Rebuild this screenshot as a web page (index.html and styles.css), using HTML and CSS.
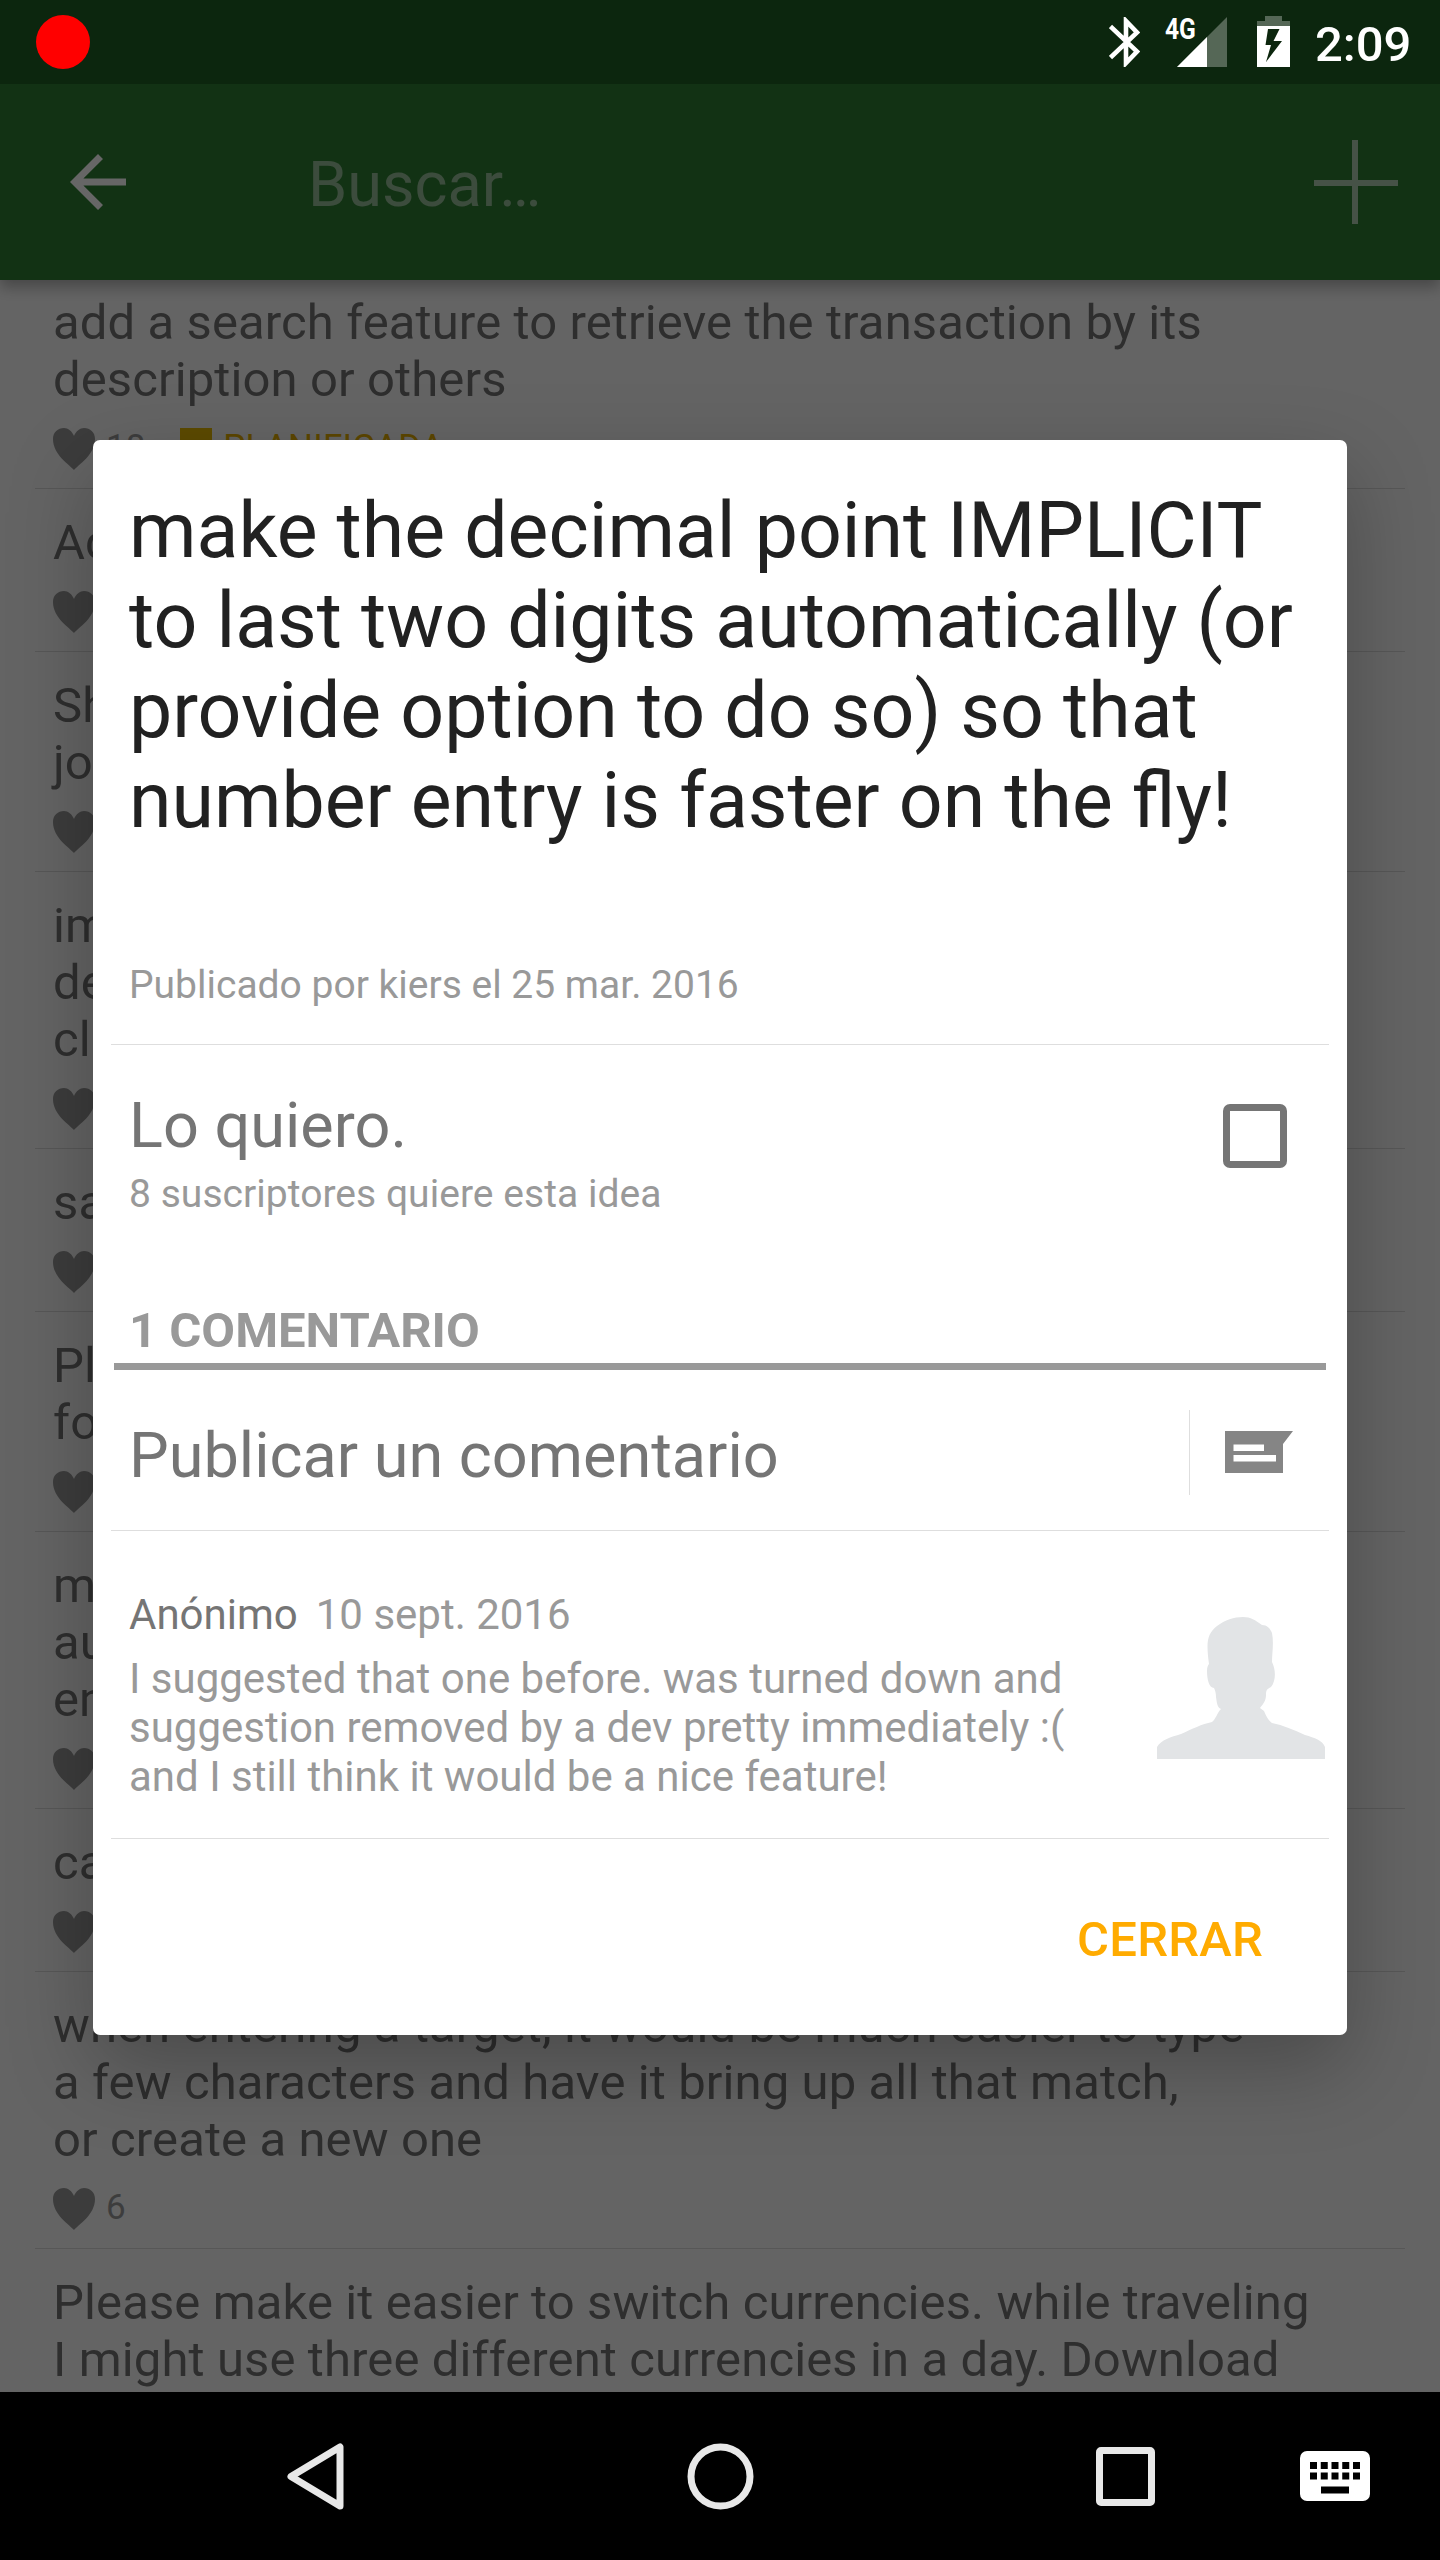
FILE: index.html
```html
<!DOCTYPE html>
<html lang="es">
<head>
<meta charset="utf-8">
<title>Buscar</title>
<link rel="stylesheet" href="styles.css">
</head>
<body>
<svg class="defs" width="0" height="0" aria-hidden="true">
  <symbol id="heart" viewBox="0 0 42 42"><path d="M21 42C17 37 0 27 0 11C0 4 5 0 11 0C15 0 19 3 21 8C23 3 27 0 31 0C37 0 42 4 42 11C42 27 25 37 21 42Z" fill="#969696"/></symbol>
</svg>
<div class="screen">
  <header class="status">
    <svg class="record" viewBox="0 0 54 54"><circle cx="27" cy="27" r="27" fill="#f00"/></svg>
    <div class="status-icons">
      <svg class="bluetooth" viewBox="0 0 31 50"><path d="M1.500 9.500L28 34.500L17 46V4L28 15.500L1.500 40.500" fill="none" stroke="#fff" stroke-width="4.600"/></svg>
      <div class="network">
        <span class="network-type">4G</span>
        <svg class="signal" viewBox="0 0 50 50"><path d="M50 0V50H0Z" fill="#fff" opacity=".3"/><path d="M30 20V50H0Z" fill="#fff"/></svg>
      </div>
      <svg class="battery" viewBox="0 0 33 51"><path d="M8 0H25V5H33V10H0V5H8Z" fill="#fff" opacity=".3"/><path fill-rule="evenodd" d="M0 10H33V51H0ZM11 13L8.500 29H14L9 46L25 25H16.500L22.500 13Z" fill="#fff"/></svg>
      <span class="clock">2:09</span>
    </div>
  </header>
  <div class="toolbar">
    <svg class="back" viewBox="0 0 56 56"><path d="M56 24.500H13.400L33 4.900L28 0L0 28L28 56L33 51.100L13.400 31.500H56Z" fill="#fff"/></svg>
    <span class="search">Buscar…</span>
    <svg class="plus" viewBox="0 0 84 84"><path d="M38 0H44V40H84V46H44V84H38V46H0V40H38Z" fill="#fff"/></svg>
  </div>
  <main class="ideas">
    <article class="idea"><p>add a search feature to retrieve the transaction by its<br>description or others</p><div class="meta"><svg class="heart"><use href="#heart"/></svg><span>18</span><i class="tag"></i><span class="tag-name">PLANIFICADA</span></div></article>
    <article class="idea"><p>Ac</p><div class="meta"><svg class="heart"><use href="#heart"/></svg></div></article>
    <article class="idea"><p>Sh<br>jo</p><div class="meta"><svg class="heart"><use href="#heart"/></svg></div></article>
    <article class="idea"><p>im<br>de<br>cl</p><div class="meta"><svg class="heart"><use href="#heart"/></svg></div></article>
    <article class="idea"><p>sa</p><div class="meta"><svg class="heart"><use href="#heart"/></svg></div></article>
    <article class="idea"><p>Pl<br>fo</p><div class="meta"><svg class="heart"><use href="#heart"/></svg></div></article>
    <article class="idea"><p>m<br>au<br>en</p><div class="meta"><svg class="heart"><use href="#heart"/></svg></div></article>
    <article class="idea"><p>ca</p><div class="meta"><svg class="heart"><use href="#heart"/></svg></div></article>
    <article class="idea"><p>when entering a target, it would be much easier to type<br>a few characters and have it bring up all that match,<br>or create a new one</p><div class="meta"><svg class="heart"><use href="#heart"/></svg><span>6</span></div></article>
    <article class="idea"><p>Please make it easier to switch currencies. while traveling<br>I might use three different currencies in a day. Download</p></article>
  </main>
  <nav class="navbar">
    <svg class="nav-back" viewBox="0 0 57 67"><path d="M53 4V63L4 33.500Z" fill="none" stroke="#e8e8e8" stroke-width="7" stroke-linejoin="round"/></svg>
    <svg class="nav-home" viewBox="0 0 67 67"><circle cx="33.500" cy="33.500" r="29.500" fill="none" stroke="#e8e8e8" stroke-width="7"/></svg>
    <svg class="nav-recent" viewBox="0 0 59 59"><rect x="3.500" y="3.500" width="52" height="52" rx="1.500" fill="none" stroke="#e8e8e8" stroke-width="7"/></svg>
    <svg class="nav-keyboard" viewBox="0 0 70 50"><rect width="70" height="50" rx="7" fill="#fff"/><path d="M10 14.500H60M10 25H60" stroke="#000" stroke-width="7" stroke-dasharray="7 3.750"/><path d="M21 39H49" stroke="#000" stroke-width="7"/></svg>
  </nav>
  <div class="scrim">
    <section class="dialog">
      <div class="intro">
        <h1>make the decimal point IMPLICIT<br>to last two digits automatically (or<br>provide option to do so) so that<br>number entry is faster on the fly!</h1>
        <p class="byline">Publicado por kiers el 25 mar. 2016</p>
      </div>
      <div class="vote">
        <div>
          <p class="big">Lo quiero.</p>
          <p class="subscribers">8 suscriptores quiere esta idea</p>
        </div>
        <span class="checkbox"></span>
      </div>
      <h2>1 COMENTARIO</h2>
      <div class="post">
        <p class="big">Publicar un comentario</p>
        <span class="separator"></span>
        <svg class="comment-icon" viewBox="0 0 68 42"><path fill-rule="evenodd" d="M0 0H68L58 13V42H0ZM8.500 13.500V20H39V13.500ZM8.500 24V30.500H51V24Z" fill="#858585"/></svg>
      </div>
      <div class="comment">
        <div class="comment-text">
          <p class="author">Anónimo<span>10 sept. 2016</span></p>
          <p>I suggested that one before. was turned down and<br>suggestion removed by a dev pretty immediately :(<br>and I still think it would be a nice feature!</p>
        </div>
        <svg class="avatar" viewBox="0 0 168 142"><path d="M0 142V130C4 123 14 120 24 117C35 112 45 107 55 105C59 102 60 96 64 92C60 90 60 86 59 80C59 76 58 73 57 71C52 71 50 62 50 54C50 50 51 48 52 47C49 25 50 17 60 9C68 3 77 0 86 0C94 0 98 3 105 8C110 8 113 11 115 16C117 26 115 36 115 45C119 53 119 64 114 70C110 72 109 73 109 78C109 84 106 87 103 91L107 94C109 99 112 104 115 106C126 108 137 113 148 118C158 121 165 123 168 130V142Z" fill="#e2e4e6"/></svg>
      </div>
      <footer><button>CERRAR</button></footer>
    </section>
  </div>
</div>
</body>
</html>
```
FILE: styles.css
```css
* { box-sizing: border-box; margin: 0; padding: 0; }
body { width: 1440px; height: 2560px; overflow: hidden; background: #000; font-family: Roboto, sans-serif; }
svg { display: block; flex: none; }
.defs { position: absolute; }
.screen { position: relative; display: flex; flex-direction: column; width: 1440px; height: 2560px; overflow: hidden; }
.status { position: relative; z-index: 3; display: flex; justify-content: space-between; height: 84px; padding: 0 31px 0 36px; background: #0c260e; }
.record { width: 54px; height: 54px; margin-top: 15px; }
.status-icons { display: flex; align-items: flex-start; }
.bluetooth { width: 31px; height: 50px; margin: 17px 25px 0 0; }
.network { position: relative; width: 62px; height: 50px; margin: 17px 30px 0 0; }
.signal { width: 50px; height: 50px; margin-left: 12px; }
.network-type { position: absolute; left: 0; top: -3px; color: #fff; font-size: 30px; line-height: 30px; font-weight: 700; transform: scaleX(.82); transform-origin: 0 0; }
.battery { width: 33px; height: 51px; margin: 16px 25px 0 0; }
.clock { width: 94px; margin-top: 16px; color: #fff; font-size: 49px; line-height: 57px; font-weight: 500; white-space: nowrap; }
.toolbar { position: relative; z-index: 1; flex: none; display: flex; align-items: flex-start; height: 196px; padding: 0 42px 0 70px; background: #2e7d32; box-shadow: 0 7px 14px rgba(0,0,0,.3); }
.back { width: 56px; height: 56px; margin-top: 70px; }
.search { flex: 1; margin: 64px 0 0 182px; color: rgba(255,255,255,.5); font-size: 63px; line-height: 74px; }
.plus { width: 84px; height: 84px; margin-top: 56px; opacity: .62; }
.ideas { flex: 1; min-height: 0; overflow: hidden; padding: 0 35px; background: #fafafa; }
.idea { padding: 25px 18px 18px; border-bottom: 1px solid rgba(0,0,0,.13); }
.idea:first-child { margin-top: -11px; }
.idea p { color: #737373; font-size: 49px; line-height: 57px; letter-spacing: .11px; white-space: nowrap; }
.meta { display: flex; align-items: center; height: 42px; margin-top: 20px; color: #999; font-size: 35px; line-height: 42px; }
.meta span { margin-top: -2px; }
.heart { width: 42px; height: 42px; margin-right: 11px; }
.tag { width: 32px; height: 32px; margin: 0 11px 10px 35px; background: #e6b800; }
.meta .tag-name { color: #e6b000; letter-spacing: .2px; }
.navbar { position: relative; z-index: 3; flex: none; display: flex; height: 168px; padding-left: 287px; background: #000; }
.nav-back { width: 57px; height: 67px; margin-top: 51px; }
.nav-home { width: 67px; height: 67px; margin: 51px 0 0 343px; }
.nav-recent { width: 59px; height: 59px; margin: 55px 0 0 342px; }
.nav-keyboard { width: 70px; height: 50px; margin: 59px 0 0 145px; }
.scrim { position: absolute; inset: 84px 0 168px; z-index: 2; background: rgba(0,0,0,.6); padding: 356px 93px 0; }
.dialog { height: 1595px; padding: 0 18px; background: #fff; border-radius: 7px; box-shadow: 0 32px 84px rgba(0,0,0,.26); white-space: nowrap; }
.intro { height: 605px; padding: 46px 18px 0; border-bottom: 1px solid #dedede; }
h1 { color: #212121; font-size: 77px; line-height: 90px; font-weight: 400; }
.byline { margin-top: 116px; color: #999; font-size: 39px; line-height: 46px; }
.vote { display: flex; justify-content: space-between; height: 245px; padding: 44px 42px 0 18px; }
.big { color: #757575; font-size: 63px; line-height: 74px; }
.subscribers { margin-top: 8px; color: #999; font-size: 39px; line-height: 46px; letter-spacing: .04px; }
.checkbox { width: 64px; height: 64px; margin-top: 15px; border: 7px solid #757575; border-radius: 7px; }
h2 { margin: 0 3px; height: 80px; padding: 12px 15px 0; border-bottom: 7px solid #999; color: #999; font-size: 49px; line-height: 57px; font-weight: 700; }
.post { display: flex; height: 161px; padding: 0 36px 0 18px; border-bottom: 1px solid #dedede; }
.post .big { flex: 1; margin-top: 49px; }
.separator { width: 1px; height: 85px; margin: 40px 35px 0 0; background: #dedede; }
.comment-icon { width: 68px; height: 42px; margin-top: 61px; }
.comment { display: flex; justify-content: space-between; height: 308px; padding: 59px 4px 0 18px; border-bottom: 1px solid #dedede; color: #999; font-size: 42px; line-height: 49px; }
.author { margin-bottom: 15px; color: #757575; }
.author span { margin-left: 18px; color: #999; }
.avatar { width: 168px; height: 142px; margin-top: 27px; }
footer { display: flex; justify-content: flex-end; padding: 72px 66px 0 0; }
button { border: 0; background: none; color: #ffab00; font: 500 49px/57px Roboto, sans-serif; letter-spacing: .2px; }
```
